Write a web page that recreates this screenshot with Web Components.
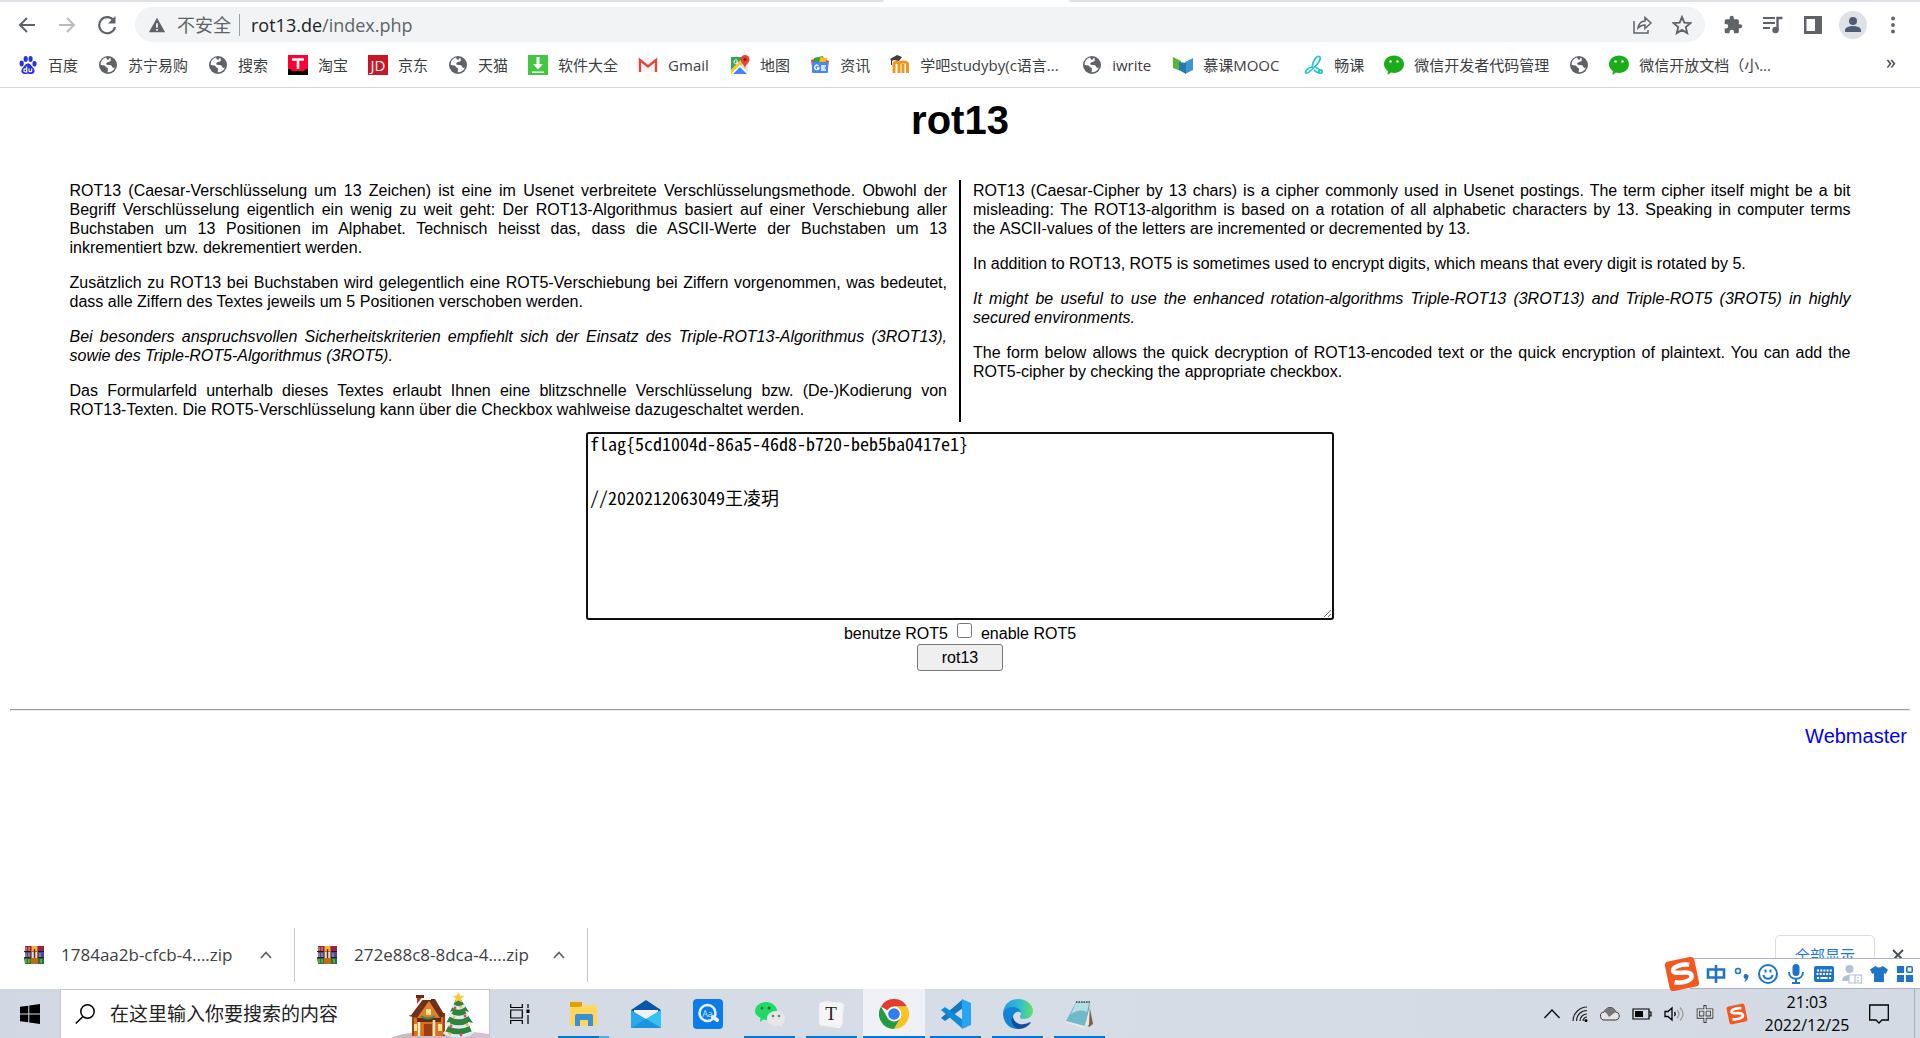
<!DOCTYPE html>
<html lang="zh-CN">
<head>
<meta charset="utf-8">
<title>rot13</title>
<style>
html,body{margin:0;height:100%;background:#fff}
body{overflow:hidden}
</style>
</head>
<body>
<browser-window>
  <nav-bar slot="chrome"></nav-bar>
  <bookmarks-bar slot="chrome">
    <book-mark icon="baidu">百度</book-mark>
    <book-mark icon="globe">苏宁易购</book-mark>
    <book-mark icon="globe">搜索</book-mark>
    <book-mark icon="taobao">淘宝</book-mark>
    <book-mark icon="jd">京东</book-mark>
    <book-mark icon="globe">天猫</book-mark>
    <book-mark icon="download">软件大全</book-mark>
    <book-mark icon="gmail" style="--label:42px">Gmail</book-mark>
    <book-mark icon="maps">地图</book-mark>
    <book-mark icon="news">资讯</book-mark>
    <book-mark icon="moodle" style="--label:142px">学吧studyby(c语言...</book-mark>
    <book-mark icon="globe" style="--label:41px">iwrite</book-mark>
    <book-mark icon="mooc" style="--label:81px">慕课MOOC</book-mark>
    <book-mark icon="chang">畅课</book-mark>
    <book-mark icon="wechat">微信开发者代码管理</book-mark>
    <book-mark icon="globe"></book-mark>
    <book-mark icon="wechat">微信开放文档（小...</book-mark>
  </bookmarks-bar>
  <rot-page></rot-page>
  <download-shelf slot="bottom">
    <download-item>1784aa2b-cfcb-4....zip</download-item>
    <download-item>272e88c8-8dca-4....zip</download-item>
  </download-shelf>
  <task-bar slot="bottom"></task-bar>
  <ime-bar slot="overlay"></ime-bar>
</browser-window>
<script>
const UI = '"Open Sans","Noto Sans CJK SC",sans-serif';
const ICONS = {
back:['0 0 20 20','<path d="M18 10H3M10 3l-7 7 7 7" fill="none" stroke="#5f6368" stroke-width="2"/>'],
forward:['0 0 20 20','<path d="M2 10h15M10 3l7 7-7 7" fill="none" stroke="#babcbe" stroke-width="2"/>'],
reload:['0 0 20 20','<path d="M16.6 5.4A8 8 0 1 0 18 12" fill="none" stroke="#5f6368" stroke-width="2.2"/><path d="M18.500 1v7.500h-7.500z" fill="#5f6368"/>'],
warn:['0 0 20 20','<path d="M10 2l9 16H1z" fill="#5f6368"/><path d="M10 8v5M10 14.500v2" stroke="#f1f3f4" stroke-width="2"/>'],
share:['0 0 20 20','<path d="M2 6v12h14v-3M6 13c1-5 4-7 7-7V2.500l6 5.500-6 5.500V10c-3 0-5 1-7 3z" fill="none" stroke="#5f6368" stroke-width="1.500"/>'],
star:['0 0 20 20','<path d="M10 2l2.300 5.600 6.200.5-4.700 4 1.400 6-5.200-3.200-5.200 3.200 1.400-6-4.700-4 6.200-.5z" fill="none" stroke="#5f6368" stroke-width="1.900"/>'],
puzzle:['0 0 24 24','<path d="M20.500 11H19V7a2 2 0 0 0-2-2h-4V3.500a2.500 2.500 0 0 0-5 0V5H4a2 2 0 0 0-2 2v3.800h1.500a2.700 2.700 0 0 1 0 5.400H2V20a2 2 0 0 0 2 2h3.800v-1.500a2.700 2.700 0 0 1 5.400 0V22H17a2 2 0 0 0 2-2v-4h1.500a2.500 2.500 0 0 0 0-5z" fill="#5f6368"/>'],
music:['0 0 20 20','<path d="M0 3h12M0 8h12M0 13h7" stroke="#5f6368" stroke-width="2"/><circle cx="12.500" cy="15" r="3.200" fill="#5f6368"/><path d="M14.500 15V3h5" fill="none" stroke="#5f6368" stroke-width="2.400"/>'],
panel:['0 0 20 20','<path d="M1 1h18v18H1z" fill="#5f6368"/><path d="M3.500 4H12v12H3.500z" fill="#fff"/>'],
user:['0 0 28 28','<circle cx="14" cy="14" r="14" fill="#dee1e6"/><circle cx="14" cy="10" r="4" fill="#505b76"/><path d="M6 21v-1.500c0-3.500 5-4.500 8-4.500s8 1 8 4.500V21z" fill="#505b76"/>'],
dots:['0 0 20 20','<g fill="#5f6368"><circle cx="10" cy="3.500" r="1.900"/><circle cx="10" cy="10" r="1.900"/><circle cx="10" cy="16.500" r="1.900"/></g>'],
globe:['0 0 20 20','<circle cx="10" cy="10" r="9" fill="#5f6368"/><path d="M8 2.500C4.500 3.500 2.500 6.500 2.700 10l3.800.5c1.500.4 1.200 2 2.500 2.200 1.500.3 1 1.800.5 4.500 3.500.2 6.300-1.500 7.500-5-1.200 1.200-2.500.8-3-.7-.4-1.500-2-1.300-3.500-1.400C8 10 7.500 8.500 9 7.500c1.500-.9 2.600-.3 3.500-1.500.6-.8.5-2.200-.5-3.300-1 .6-.8 1.900-2 2C8.500 4.800 8.700 3.500 8 2.500z" fill="#fff"/>'],
baidu:['0 0 20 20','<g fill="#2932e1"><ellipse cx="3.700" cy="8.500" rx="2.100" ry="2.900"/><ellipse cx="7.700" cy="4" rx="2.100" ry="2.900"/><ellipse cx="12.600" cy="4" rx="2.100" ry="2.900"/><ellipse cx="16.500" cy="8.800" rx="2.100" ry="2.800"/><path d="M10 8.500c2.800 0 3.300 2.500 5 4 2.600 2.300 2 6.500-1.500 6.500-1.500 0-2-.3-3.500-.3s-2 .3-3.500.3C3 19 2.400 14.800 5 12.500c1.700-1.500 2.200-4 5-4z"/></g><path d="M8.700 11.500v5.300H7.300a1.400 1.400 0 0 1 0-3h1.400M11 13.500v2.300c0 1.200 2.700 1.200 2.700 0v-2.300" fill="none" stroke="#fff" stroke-width="1.200"/>'],
taobao:['0 0 20 20','<path fill="#ff0036" d="M0 0h20v16H0z"/><path d="M0 14h2l2 2h12l2-2h2v6H0z" fill="#000"/><path d="M4 4.500h12M10 4v10" stroke="#fff" stroke-width="2.600"/>'],
jd:['0 0 20 20','<path fill="#c91623" d="M0 0h20v20H0z"/><text x="10" y="16" font-family="Open Sans" font-size="15" fill="#fff" text-anchor="middle">JD</text>'],
download:['0 0 20 20','<path fill="#43c743" d="M0 0h20v20H0z"/><path d="M8.500 2h3v7H15l-5 5.500L5 9h3.500zM4 16.500h12V18H4z" fill="#fff"/>'],
gmail:['0 0 20 20','<path d="M1 4h18v13H1z" fill="#f3f3f3"/><path d="M2 17V5l8 6.500L18 5v12" fill="none" stroke="#dd4b3e" stroke-width="2.400"/>'],
maps:['0 0 20 20','<path d="M1 2h17v17H1z" fill="#e8e8e8"/><path d="M1 2h13L1 15z" fill="#34a853"/><path d="M1 19L10 10l8 9z" fill="#4285f4"/><path d="M1 19v-4L14 2h4v3z" fill="#fbc52d"/><path d="M2 19L10 11l8 8" fill="none" stroke="#fff" stroke-width="1.500"/><path d="M15 0a4.500 4.500 0 0 1 4.500 4.500C19.500 8 15.500 9 15 14c-.5-5-4.500-6-4.500-9.500A4.500 4.500 0 0 1 15 0z" fill="#e94335"/><circle cx="15" cy="4.500" r="1.600" fill="#8d1f17"/><path d="M7.500 5.500A2 2 0 1 0 8 7H6" stroke="#fff" fill="none"/>'],
news:['0 0 20 20','<path d="M4 3l9-2 2 8H4z" fill="#2c9f49"/><path d="M10 2l7 1-1 7H9z" fill="#fbbc04"/><path d="M1 5l3-1v8H2zM16 5l3 1-1 7h-2z" fill="#ea4335"/><path d="M2 7h16v10a1 1 0 0 1-1 1H3a1 1 0 0 1-1-1z" fill="#4688f1"/><path d="M8.500 11A2.200 2.200 0 1 0 9 13H7M11 11h5M11 13h4M11 15h5" fill="none" stroke="#fff" stroke-width="1.300"/>'],
moodle:['0 0 20 20','<path d="M4 18V9.500c0-3 5-3 5 0V18m0-8.500c0-3.500 8.500-3.500 8.500 0V18M13 9v9" fill="none" stroke="#f0961e" stroke-width="3"/><path d="M0 4l7-4 5 2-3 4-5-1-2 1v4H1V5z" fill="#433f3c"/>'],
mooc:['0 0 20 20','<path d="M0 2l8 4v10l-8-3z" fill="#5bb531"/><path d="M20 3l-8 4v12l8-4z" fill="#3f96c9"/><path d="M6 7l7 1v11l-7-4z" fill="#2877ae"/>'],
chang:['0 0 20 20','<g fill="none" stroke="#1fc7c4" stroke-width="1.700"><path d="M8 12C9 6 12 1 15 1.500c3 .5 0 6-3 9-4 4-8 8.500-10 7.500-2-1.500 3-6 6-6 4 0 8 2 7.500 4.500-.5 2-3.500 1-5.500-2"/><circle cx="16.500" cy="16.500" r="1.700"/></g>'],
wechat:['0 0 20 20','<path d="M10 0.500c5.500 0 10 3.800 10 8.800S15.500 18 10 18c-1 0-2.200-.2-3-.4L3.500 20l.4-4C1.500 14.500 0 12 0 9.300 0 4.300 4.500.5 10 .5z" fill="#1aad19"/><circle cx="6.500" cy="6.500" r="1.200" fill="#fff"/><circle cx="13.500" cy="6.500" r="1.200" fill="#fff"/>'],
rar:['0 0 20 18','<path fill="#9d1f4b" d="M1 0h19v6H1z"/><path fill="#3c4bb0" d="M1 6h19v6H1z"/><path fill="#1c7a3f" d="M0 12h20v6H1z"/><path d="M2 1v4M5 1v4M2 7v4M5 7v4M2 13v4M5 13v4M16 7v4M17 13v4" stroke="#e3b53a"/><path fill="#c4691c" d="M7 0h7v18H7z"/><path fill="#f4b53c" d="M8 0h5v5H8z"/><path fill="#ddd" d="M8 6h5v6H8z"/><path d="M10.500 3v9" stroke="#603010" stroke-width="1.400"/><path d="M0 5.500h7m7 0h6M0 11.700h7m7 0h6" stroke="#1d1430"/>'],
chev:['0 0 12 12','<path d="M1 9l5-5.500L11 9" fill="none" stroke="#5f6368" stroke-width="1.800"/>'],
close:['0 0 12 12','<path d="M1 1l10 10M11 1L1 11" stroke="#4b4f54" stroke-width="2"/>'],
win:['0 0 20 20','<path d="M0 2.800L8.300 1.700v7.800H0zM9.300 1.500L20 0v9.500H9.300zM0 10.500h8.300v7.800L0 17.200zM9.300 10.500H20V20L9.300 18.500z" fill="#000"/>'],
search:['0 0 20 20','<circle cx="12.500" cy="7.500" r="6.700" fill="none" stroke="#000" stroke-width="1.500"/><path d="M8 12.500L.7 19.500" stroke="#000" stroke-width="1.500"/>'],
holiday:['0 0 98 48','<defs><linearGradient id="g"><stop stop-color="#c9b8c0"/><stop offset="1" stop-color="#d6c0d2"/></linearGradient></defs><path d="M0 48c14-7 60-10 98-4v4z" fill="url(#g)"/><path d="M21 24h32v22H21z" fill="#d9701b"/><path d="M22 46V24h31v22" fill="none" stroke="#a2450f" stroke-width="2"/><path d="M26 7h6v12h-6z" fill="#b43c1c"/><path d="M25 5h8v3h-8z" fill="#6d2712"/><path d="M37 9L52 27H26z" fill="#e3812a"/><path d="M18 26L30 9h14l10 17-5 2-11-17-12 17z" fill="#71301e"/><path d="M19 25L31 9h9" fill="none" stroke="#fff" stroke-width="2"/><path d="M26 28h24v4H26z" fill="#6a2a18"/><path d="M28 32v14M43 30v16" stroke="#fbe6c7" stroke-width="2.500"/><path d="M33 34h8v12h-8z" fill="#9c3e12"/><path d="M35 19h5v6h-5zM47 34h4v7h-4zM23 34h3v7h-3z" fill="#ffe38d"/><path d="M30 26q7 5 14 0" stroke="#2c944e" stroke-width="2" fill="none"/><path d="M67 5l11 17-4-1 8 12-5-1 5 13H53l6-13-4 1 7-12-3 1z" fill="#32813c"/><g stroke="#d9edf6" stroke-width="3.500" fill="none" stroke-linecap="round"><path d="M62 16q6 4 11 0M59 25q9 5 17 0M56 34q12 6 23 0M54 43q13 6 27 0"/></g><g fill="#e34b3d"><circle cx="64" cy="18" r="1.400"/><circle cx="74" cy="26" r="1.400"/><circle cx="60" cy="36" r="1.400"/><circle cx="70" cy="45" r="1.400"/></g><g fill="#f5c443"><circle cx="70" cy="17" r="1.400"/><circle cx="63" cy="27" r="1.400"/><circle cx="76" cy="35" r="1.400"/><circle cx="59" cy="44" r="1.400"/></g><path d="M67.500 2l1.700 3.500 4 .5-3 2.500.8 4-3.500-2-3.500 2 .8-4-3-2.500 4-.5z" fill="#ffc63a"/>'],
taskview:['0 0 20 20','<path d="M.7 0v3.500h11.600V0M.7 20v-3.500h11.600V20M.7 6h11.600v8H.7zM18 0v4M18 11v9" fill="none" stroke="#000" stroke-width="1.200"/><path d="M16.500 5.500h3v3.500h-3z"/>'],
explorer:['0 0 30 30','<path d="M1 4h11l2 2h14v21H1z" fill="#ffd968"/><path d="M1 3h12v4L11 8H1z" fill="#e2a000"/><path d="M1 9h27v17H1z" fill="#ffd65c"/><path d="M6 27V17a2 2 0 0 1 2-2h14a2 2 0 0 1 2 2v10h-5v-6h-8v6z" fill="#3b8fd5"/>'],
mail:['0 0 30 30','<path d="M0 11L15 1l15 10v4H0z" fill="#0a57a4"/><path d="M3 11h24v9H3z" fill="#f4f6fa"/><path d="M0 11l15 9L30 11v18H0z" fill="#29a8ea"/><path d="M15 20l15-9v18z" fill="#35c2f3"/><path d="M0 29l15-9 15 9z" fill="#1d93de"/><path d="M3 11h24l-12 8z" fill="#eef2f7"/>'],
aa:['0 0 30 30','<rect width="30" height="30" rx="4" fill="#0d7ce8"/><circle cx="14.500" cy="14" r="8" fill="none" stroke="#e6f4ff" stroke-width="2.500"/><path d="M20 18l4 3" stroke="#e6f4ff" stroke-width="4" stroke-linecap="round"/><text x="14.500" y="17.500" font-family="Open Sans" font-size="9" fill="#c6e6ff" text-anchor="middle">Aa</text>'],
wx:['0 0 30 30','<path d="M11 3c6 0 11 4 11 9s-5 9-11 9c-1 0-2-.1-3-.4L5 23l.5-4C2 17 0 15 0 12 0 7 5 3 11 3z" fill="#1fd968"/><circle cx="7" cy="9" r="1.500" fill="#146c38"/><circle cx="14" cy="9" r="1.500" fill="#146c38"/><path d="M21 12c5 0 9 3.300 9 7.500 0 2.500-1.200 4.200-3 5.500l.3 3-3-1.600c-1 .3-2 .5-3.300.5-5 0-9-3.200-9-7.400S16 12 21 12z" fill="#e6e6e6"/><circle cx="18" cy="17" r="1.300" fill="#777"/><circle cx="24" cy="17" r="1.300" fill="#777"/>'],
typora:['0 0 30 30','<rect x="4" y="3" width="22" height="25" rx="3" fill="#fafafa" transform="rotate(8 15 15)"/><rect x="2" y="3" width="24" height="24" rx="3" fill="#f5f5f5" stroke="#ddd" stroke-width=".5"/><text x="14" y="21" font-family="Liberation Serif" font-size="19" text-anchor="middle" fill="#222">T</text>'],
chrome:['0 0 30 30','<path d="M15 15L2 7.500A15 15 0 0 1 28 7.500H15z" fill="#e33b2e"/><path d="M15 7.500h13A15 15 0 0 1 15 30l6.500-11.200z" fill="#fcc31e"/><path d="M2 7.500L8.500 18.800 21.500 18.800 15 30A15 15 0 0 1 2 7.500z" fill="#249a41"/><circle cx="15" cy="15" r="7.500" fill="#fff"/><circle cx="15" cy="15" r="5.800" fill="#2f7df0"/>'],
vscode:['0 0 30 30','<path d="M22 0v9L4 22l-4-3z" fill="#1279bd"/><path d="M4 8l18 13v9L0 11z" fill="#0f8bd8"/><path d="M21 0l9 4v22l-9 4z" fill="#29a4f2"/>'],
edge:['0 0 30 30','<defs><linearGradient id="a"><stop stop-color="#1b9de2"/><stop offset=".6" stop-color="#35c1cc"/><stop offset="1" stop-color="#66e05b"/></linearGradient></defs><path d="M0 14C1 5 7 0 15 0c9 0 15 6 15 12 0 5-4 8-9 8-3 0-4-1-4-2 0-2 1-2 1-4 0-3-3-5-7-5-5 0-9 2-11 5z" fill="url(#a)"/><path d="M0 14c2-4 5-6 9-6 5 0 9 2 9 6-2-2-6-2-8 3-2 6 2 11 7 13C7 31 0 24 0 14z" fill="#1583d5"/><path d="M10 17c0 6 6 9 11 8 4-.6 6-2 7-2-2 4-7 7-12 7C9 28 7 21 10 17z" fill="#0f4f9e"/>'],
notepad:['0 0 30 30','<path d="M24 4l4 21-4 3-4-5z" fill="#80603f"/><path d="M11 3h14l-5 25L1 22z" fill="#6fb9c8"/><path d="M11 4h13l-2 9C14 9 9 14 6 15z" fill="#b5dde4"/><path d="M1 22l19 5 2-2-2 4L1 24z" fill="#e8e8e8"/><path d="M25 5l-1 21-4 1z" fill="#e3e9ec"/><path d="M11 3h14" stroke="#5d6670" stroke-width="2" stroke-dasharray="1.500 1"/>'],
up:['0 0 16 16','<path d="M.5 12L8 4l7.500 8" fill="none" stroke="#000" stroke-width="1.300"/>'],
wifi:['0 0 16 16','<g fill="none" stroke="#222" stroke-width="1.200"><path d="M1 15C1 7 8 1 15 1M4.500 15C4.500 9 9 4.500 15 4.500M8 15c0-4 3-7 7-7M11 15c0-2 2-4 4-4"/></g><circle cx="14" cy="14.500" r="1.500"/>'],
cloud:['0 0 20 16','<path d="M5 14a4 4 0 0 1-1-8c1-2 3-4.500 6-4.500s5 2 5.500 4.500c5 0 5 8 0 8z" fill="#e4e4e4" stroke="#333"/><path d="M4 6c1-2 3-4.500 6-4.500s5 2 5.500 4.500L9 11C7 7 5 6 4 6z" fill="#777"/>'],
battery:['0 0 20 16','<path d="M1 3h16v10H1zM17 6h2v4h-2" fill="none" stroke="#000" stroke-width="1.200"/><path d="M3 5h8v6H3z"/>'],
sound:['0 0 20 16','<path d="M1 5.500h3L8 2v12l-4-3.500H1z" fill="none" stroke="#000" stroke-width="1.300"/><path d="M10.500 6q1.500 2 0 4" fill="none" stroke="#000" stroke-width="1.300"/><path d="M13 4q4 4 0 8M16 1.500q6 6.500 0 13" fill="none" stroke="#999" stroke-width="1.200"/>'],
zhong:['0 0 20 20','<path d="M2.500 5.500h15v8h-15zM10 0v20" fill="none" stroke="#333" stroke-width="3.400"/><path d="M2.500 5.500h15v8h-15zM10 1v18" fill="none" stroke="#e8ebf0" stroke-width="1.500"/>'],
zhongBlue:['0 0 20 20','<path d="M2 5.500h16v8H2zM10 1v18" fill="none" stroke="#1f74c8" stroke-width="2.600"/>'],
sogou:['0 0 36 36','<g transform="rotate(-12 18 18)"><rect x="3" y="3" width="30" height="30" rx="4" fill="#f4571f"/><path d="M27 10.500C20 8 10 9 10 13c0 5 17 2 17 8.500 0 5.500-11 6-18 3" fill="none" stroke="#fff" stroke-width="4.500"/></g>'],
notify:['0 0 20 20','<path d="M.7 1h18.600v15H13l-3 3-3-3H.7z" fill="none" stroke="#000" stroke-width="1.300"/>'],
punct:['0 0 16 20','<circle cx="4" cy="7" r="2.500" fill="none" stroke="#1f74c8" stroke-width="1.500"/><path d="M9.500 12a2.500 2.500 0 1 1 4.500 2c-.5 2-2 3.500-4 4 1-1 1.500-2 1.500-3-1.200-.3-2-1.500-2-3z" fill="#1f74c8"/>'],
smile:['0 0 20 20','<g fill="none" stroke="#1f74c8" stroke-width="2"><circle cx="10" cy="10" r="9"/><path d="M5.500 11a4.600 4.600 0 0 0 9 0M7.500 5.500v3M12.500 5.500v3"/></g>'],
mic:['0 0 20 20','<rect x="6.500" y="0" width="7" height="12" rx="3.500" fill="#1f74c8"/><path d="M3 8c0 9 14 9 14 0M10 15v4M6 19h8" fill="none" stroke="#1f74c8" stroke-width="2"/>'],
keyboard:['0 0 20 16','<rect width="20" height="16" rx="2" fill="#1f74c8"/><path d="M3 4.500h15M2.500 8h15" stroke="#fff" stroke-width="2" stroke-dasharray="2 1.200"/><path d="M3 12h2M6.500 12h7M15 12h2" stroke="#fff" stroke-width="2"/>'],
person:['0 0 20 20','<circle cx="7.500" cy="5" r="4" fill="#b2c0d8"/><path d="M0 17c0-8 14-8 14 0z" fill="#b2c0d8"/><path d="M7 11h12.500v8H7zM13 11v8" fill="#fff" stroke="#b2c0d8" stroke-width="1.200"/><path d="M16 13v1.500M16 16v1.500" stroke="#b2c0d8" stroke-width="1.500"/>'],
shirt:['0 0 20 20','<path d="M6 1q4 3.500 8 0l6 4-2.500 5-2-1v10h-11V9l-2 1L0 5z" fill="#1f74c8"/>'],
grid:['0 0 20 20','<path d="M1 1h8v8H1zM1 11h8v8H1zM11 11h8v8h-8z" fill="#1f74c8"/><rect x="12" y="2" width="6" height="6" rx="1" fill="none" stroke="#1f74c8" stroke-width="1.800"/>']
};
function define(name, html, after){
  const t=document.createElement('template'); t.innerHTML=html;
  customElements.define(name, class extends HTMLElement{
    constructor(){super();this.attachShadow({mode:'open'}).append(t.content.cloneNode(true));}
    connectedCallback(){if(after)after(this,this.shadowRoot);}
  });
}
const iconTag = name => `<ui-icon name="${name}"></ui-icon>`;
define('ui-icon','<style>:host{display:block;flex:none;width:var(--w,20px);height:var(--h,20px)}svg{display:block;width:100%;height:100%}</style>',(el,r)=>{
  const [box,art]=ICONS[el.getAttribute('name')];
  r.querySelector('svg')?.remove();
  r.append(document.createRange().createContextualFragment(`<svg viewBox="${box}" aria-hidden="true">${art}</svg>`));
});
define('browser-window',`<style>
:host{display:flex;flex-direction:column;min-height:100vh;position:relative;font-family:${UI};color:#3c4043}
main{flex:1}
.strip{display:flex;height:2px;background:#dee1e6}
.strip i{background:#fff;width:187px;margin-left:46%;border-radius:2px 2px 0 0}
</style><div class="strip"><i></i></div><slot name="chrome"></slot><main><slot></slot></main><slot name="bottom"></slot><slot name="overlay"></slot>`);
define('nav-bar',`<style>
:host{display:flex;align-items:center;height:45px;padding:0 17px}
button{all:unset;display:block}
.nav{display:flex;gap:20px;margin-right:18px}
.omni{flex:1;display:flex;align-items:center;height:35px;border-radius:18px;background:#f1f3f4;padding:0 13px;font-size:18px;color:#5f6368}
.safe{margin:0 8px 0 11px;border-right:1px solid #9aa0a6;padding-right:8px;line-height:22px}
.url{flex:1;margin-left:3px}
.url b{font-weight:400;color:#202124}
.acts{display:flex;gap:20px}
.tools{display:flex;align-items:center;gap:20px;margin-left:18px}
.user{--w:28px;--h:28px;margin:0 -4px}
</style>
<div class="nav"><button aria-label="Back"><ui-icon name="back"></ui-icon></button><button aria-label="Forward"><ui-icon name="forward"></ui-icon></button><button aria-label="Reload"><ui-icon name="reload"></ui-icon></button></div>
<div class="omni"><ui-icon name="warn" style="--w:18px;--h:18px"></ui-icon><span class="safe">不安全</span><span class="url"><b>rot13.de</b>/index.php</span>
<div class="acts"><button aria-label="Share"><ui-icon name="share"></ui-icon></button><button aria-label="Bookmark"><ui-icon name="star"></ui-icon></button></div></div>
<div class="tools"><button aria-label="Extensions"><ui-icon name="puzzle"></ui-icon></button><button aria-label="Media"><ui-icon name="music"></ui-icon></button><button aria-label="Side panel"><ui-icon name="panel"></ui-icon></button><button class="user" aria-label="Profile"><ui-icon name="user"></ui-icon></button><button aria-label="Menu"><ui-icon name="dots"></ui-icon></button></div>`);
define('bookmarks-bar',`<style>
:host{display:flex;align-items:center;height:36px;padding:0 24px 4px 18px;border-bottom:1px solid #d5d7da;font-size:15px}
nav{flex:1;display:flex;gap:20px}
button{all:unset;font-size:20px;line-height:20px;padding-bottom:6px;color:#3c4043}
</style><nav><slot></slot></nav><button aria-label="More bookmarks">»</button>`);
define('book-mark',`<style>:host{display:block;white-space:nowrap}a{display:flex;align-items:center;gap:10px;color:#3c4043;text-decoration:none;line-height:20px}span{min-width:var(--label,auto)}span[hidden]{display:none}</style><a href="#"><span><slot></slot></span></a>`,
(el,r)=>{
  if(!r.querySelector('ui-icon')) r.querySelector('a').insertAdjacentHTML('afterbegin',iconTag(el.getAttribute('icon')));
  r.querySelector('span').hidden=!el.textContent;
});
define('rot-page',`<style>
:host{display:block;padding:9px 10px 0;font-family:"Liberation Sans",sans-serif;color:#000;font-size:16px}
h1{font-size:40px;line-height:46px;text-align:center;margin:0 0 37px}
.cols{display:grid;grid-template-columns:1fr 2px 1fr;width:95%;margin:0 auto 10px;line-height:19px;text-align:justify}
.cols>div{padding:1px 12px}
.rule{background:#000}
p{margin:0 0 16px}p:last-child{margin:0 0 2px}
form{display:flex;flex-direction:column;align-items:center}
textarea{box-sizing:border-box;width:748px;height:188px;border:2px solid #101010;border-radius:3px;outline:none;padding:0 2px;font:18px/18px "Noto Sans Mono CJK SC","Liberation Mono",monospace;color:#000;resize:both;margin:0}
.opt{display:flex;align-items:center;line-height:21px;height:21px;gap:9px;padding-top:3px}
.opt input{width:15px;height:15px;margin:0 0 6px}
form button{width:86px;height:27px;font:16px "Liberation Sans",sans-serif;border:1px solid #767676;border-radius:3px;background:#efefef;color:#000;padding:0}
hr{border:1px inset #eee;margin:38px 0 14px}
footer{text-align:right;font-size:20px;line-height:23px;padding-right:3px}
a{color:#00e;text-decoration:none}
</style>
<h1>rot13</h1>
<div class="cols"><div lang="de">
<p>ROT13 (Caesar-Verschlüsselung um 13 Zeichen) ist eine im Usenet verbreitete Verschlüsselungsmethode. Obwohl der Begriff Verschlüsselung eigentlich ein wenig zu weit geht: Der ROT13-Algorithmus basiert auf einer Verschiebung aller Buchstaben um 13 Positionen im Alphabet. Technisch heisst das, dass die ASCII-Werte der Buchstaben um 13 inkrementiert bzw. dekrementiert werden.</p>
<p>Zusätzlich zu ROT13 bei Buchstaben wird gelegentlich eine ROT5-Verschiebung bei Ziffern vorgenommen, was bedeutet, dass alle Ziffern des Textes jeweils um 5 Positionen verschoben werden.</p>
<p><i>Bei besonders anspruchsvollen Sicherheitskriterien empfiehlt sich der Einsatz des Triple-ROT13-Algorithmus (3ROT13), sowie des Triple-ROT5-Algorithmus (3ROT5).</i></p>
<p>Das Formularfeld unterhalb dieses Textes erlaubt Ihnen eine blitzschnelle Verschlüsselung bzw. (De-)Kodierung von ROT13-Texten. Die ROT5-Verschlüsselung kann über die Checkbox wahlweise dazugeschaltet werden.</p>
</div><span class="rule"></span><div lang="en">
<p>ROT13 (Caesar-Cipher by 13 chars) is a cipher commonly used in Usenet postings. The term cipher itself might be a bit misleading: The ROT13-algorithm is based on a rotation of all alphabetic characters by 13. Speaking in computer terms the&nbsp;ASCII-values of the letters are incremented or decremented by 13.</p>
<p>In addition to ROT13, ROT5 is sometimes used to encrypt digits, which means that every digit is rotated by 5.</p>
<p><i>It might be useful to use the enhanced rotation-algorithms Triple-ROT13 (3ROT13) and Triple-ROT5 (3ROT5) in highly secured environments.</i></p>
<p>The form below allows the quick decryption of ROT13-encoded text or the quick encryption of plaintext. You can add the ROT5-cipher by checking the appropriate checkbox.</p>
</div></div>
<form onsubmit="return false"><textarea aria-label="Text" spellcheck="false">flag{5cd1004d-86a5-46d8-b720-beb5ba0417e1}


//2020212063049王凌玥</textarea>
<label class="opt"><span>benutze ROT5</span><input type="checkbox"><span>enable ROT5</span></label>
<button>rot13</button></form>
<hr><footer><a href="#">Webmaster</a></footer>`,(el,r)=>{
  const t=r.querySelector('textarea');t.focus({preventScroll:true});t.setSelectionRange(t.value.length,t.value.length);
});
define('download-shelf',`<style>
:host{display:flex;align-items:center;box-sizing:border-box;height:61px;background:#fff;padding:0 16px 8px 2px;font-size:17px}
.items{flex:1;display:flex}
.all{font:15px ${UI};color:#1a73e8;background:#fff;border:1px solid #dadce0;border-radius:5px;width:100px;height:40px;margin-right:17px;padding:0}
.x{all:unset;--w:12px;--h:12px}
</style><div class="items"><slot></slot></div><button class="all">全部显示</button><button class="x" aria-label="Close"><ui-icon name="close"></ui-icon></button>`);
define('download-item',`<style>
:host{display:flex;align-items:center;box-sizing:border-box;width:293px;height:54px;border-right:1px solid #c6c8ca;padding:0 16px 0 22px;gap:17px;line-height:22px}
span{flex:1;white-space:nowrap}
button{all:unset;--w:12px;--h:12px;padding:0 6px}
</style><ui-icon name="rar"></ui-icon><span><slot></slot></span><button aria-label="Options"><ui-icon name="chev"></ui-icon></button>`);
define('task-button',`<style>
:host{display:block;width:62px;height:49px}
button{all:unset;display:flex;align-items:center;justify-content:center;width:100%;height:100%;box-sizing:border-box;position:relative;--w:30px;--h:30px}
:host([running]) button::after{content:"";position:absolute;bottom:0;left:5px;right:6px;height:2px;background:#0377d7}
:host([many]) button::after{background:linear-gradient(90deg,#0377d7 80%,#5ea9e6 80%)}
:host([active]) button{background:#eff1f6}
:host([active]) button::after{left:0;right:0}
</style><button></button>`,(el,r)=>{
  const b=r.querySelector('button'), name=el.getAttribute('icon');
  b.setAttribute('aria-label',name);
  b.innerHTML=iconTag(name);
});
define('task-bar',`<style>
:host{display:flex;align-items:center;height:49px;background:linear-gradient(90deg,#d2d8e3,#d7dde7 50%,#d4dae3);color:#000}
button{all:unset}
.start{width:60px;display:flex;justify-content:center}
.find{display:flex;align-items:center;box-sizing:border-box;width:430px;height:49px;background:#fff;border:1px solid #c3c5c9;border-bottom:0;padding-left:14px}
.find input{flex:1;min-width:0;border:0;outline:0;background:none;font:19px ${UI};padding:0;margin-left:15px}
.find input::placeholder{color:#222;opacity:1}
.view{width:59px;display:flex;justify-content:center}
.apps{display:flex;flex:1;margin-left:4px}
.tray{display:flex;align-items:center;gap:12px}
.clock{width:94px;text-align:center;font:16px/23px ${UI}}
.clock div{white-space:nowrap}
.note{margin:0 25px 0 15px}
.edge{width:5px;height:49px;border-left:1px solid #a9afba}
</style>
<button class="start" aria-label="Start"><ui-icon name="win"></ui-icon></button>
<label class="find"><ui-icon name="search"></ui-icon><input type="text" aria-label="Search" placeholder="在这里输入你要搜索的内容"><ui-icon name="holiday" style="--w:98px;--h:48px"></ui-icon></label>
<button class="view" aria-label="Task view"><ui-icon name="taskview"></ui-icon></button>
<div class="apps"><task-button icon="explorer" running many></task-button><task-button icon="mail"></task-button><task-button icon="aa"></task-button><task-button icon="wx" running></task-button><task-button icon="typora" running></task-button><task-button icon="chrome" running active></task-button><task-button icon="vscode" running></task-button><task-button icon="edge" running></task-button><task-button icon="notepad" running></task-button></div>
<div class="tray"><ui-icon name="up" style="--w:16px;--h:16px"></ui-icon><ui-icon name="wifi" style="--w:16px;--h:16px"></ui-icon><ui-icon name="cloud" style="--h:16px"></ui-icon><ui-icon name="battery" style="--h:16px"></ui-icon><ui-icon name="sound" style="--h:16px"></ui-icon><ui-icon name="zhong" style="--w:18px;--h:18px"></ui-icon><ui-icon name="sogou" style="--w:22px;--h:22px"></ui-icon><div class="clock"><div>21:03</div><div>2022/12/25</div></div></div>
<button class="note" aria-label="Notifications"><ui-icon name="notify"></ui-icon></button><div class="edge"></div>`);
define('ime-bar',`<style>
:host{display:flex;align-items:center;justify-content:flex-end;position:absolute;right:0;bottom:49px;height:31px;width:230px;box-sizing:border-box;background:#fff;border:solid #aab2c4;border-width:1px 0;gap:8px;padding-right:6px}
.logo{--w:36px;--h:36px;margin-right:-2px}
</style><ui-icon class="logo" name="sogou"></ui-icon><ui-icon name="zhongBlue"></ui-icon><ui-icon name="punct" style="--w:16px"></ui-icon><ui-icon name="smile"></ui-icon><ui-icon name="mic"></ui-icon><ui-icon name="keyboard" style="--h:16px"></ui-icon><ui-icon name="person"></ui-icon><ui-icon name="shirt" style="--w:18px"></ui-icon><ui-icon name="grid" style="--w:18px"></ui-icon>`);
</script>
</body>
</html>
